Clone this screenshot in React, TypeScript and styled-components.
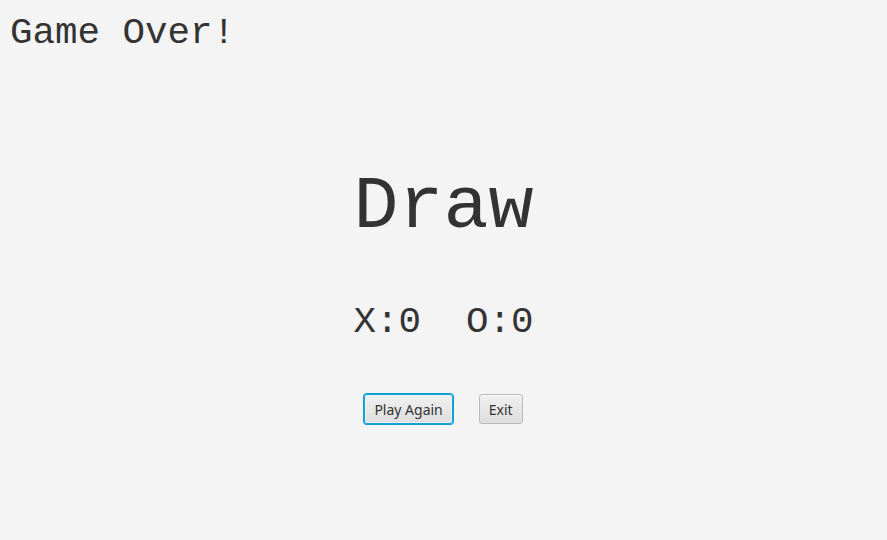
import React from "react";
import styled, { createGlobalStyle } from "styled-components";

const Global = createGlobalStyle`
  html, body { margin: 0; padding: 0; background: #f4f4f4; }
  #root { width: 887px; height: 540px; }
`;

const Screen = styled.div`
  width: 887px;
  height: 540px;
  box-sizing: border-box;
  background: #f4f4f4;
  display: flex;
  flex-direction: column;
  color: #333333;
  font-family: "Liberation Mono", "Courier New", monospace;
`;

const Title = styled.div`
  font-size: 37.5px;
  line-height: 44px;
  padding: 11px 0 0 10px;
  height: 44px;
`;

const Center = styled.div`
  display: flex;
  flex-direction: column;
  align-items: center;
  padding-top: 113px;
`;

const Result = styled.div`
  font-size: 75px;
  line-height: 80px;
`;

const Score = styled.div`
  font-size: 37.5px;
  line-height: 44px;
  margin-top: 52px;
  white-space: pre;
`;

const Buttons = styled.div`
  display: flex;
  gap: 26px;
  margin-top: 50px;
`;

const Button = styled.button<{ $focused?: boolean }>`
  font-family: "Noto Sans", "Open Sans", sans-serif;
  font-size: 14px;
  color: #333333;
  height: 30px;
  padding: 0 9px;
  border-radius: 3px;
  border: 1px solid ${(p) => (p.$focused ? "#1aa3d6" : "#b9b9b9")};
  background: linear-gradient(#f0f0f0, #dedede);
  box-shadow: ${(p) =>
    p.$focused ? "0 0 0 1px #039ed3, inset 0 0 0 1px #e6f4f9" : "inset 0 1px 0 #fbfbfb"};
  cursor: pointer;
`;

export default function App() {
  return (
    <>
      <Global />
      <Screen>
        <Title>Game Over!</Title>
        <Center>
          <Result>Draw</Result>
          <Score>{"X:0  O:0"}</Score>
          <Buttons>
            <Button $focused>Play Again</Button>
            <Button>Exit</Button>
          </Buttons>
        </Center>
      </Screen>
    </>
  );
}
